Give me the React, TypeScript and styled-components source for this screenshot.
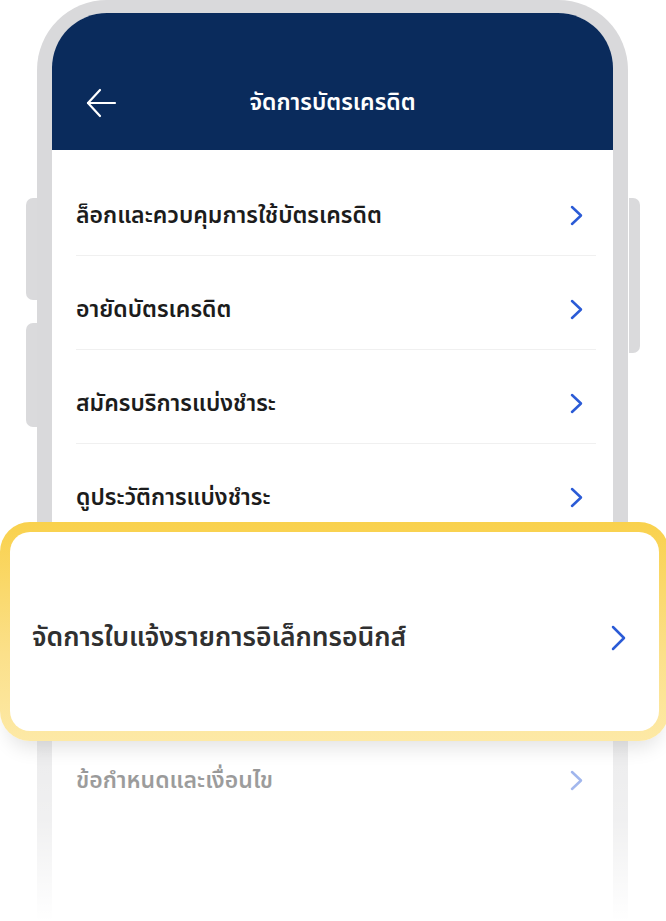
import React from "react";
import styled, { createGlobalStyle } from "styled-components";

const GlobalStyle = createGlobalStyle`
  html, body {
    margin: 0;
    padding: 0;
    background: #ffffff;
  }
  body {
    font-family: "Noto Sans Thai", "Noto Sans", "Liberation Sans", sans-serif;
  }
  * { box-sizing: border-box; }
`;

const Page = styled.div`
  position: relative;
  width: 666px;
  height: 921px;
  overflow: hidden;
  background: #ffffff;
`;

const Phone = styled.div`
  position: relative;
  width: 591px;
  min-height: 1000px;
  margin-left: 37px;
  border: 15px solid #d9d9db;
  border-top-width: 13px;
  border-bottom: none;
  border-radius: 70px 70px 0 0;
  background: #ffffff;
`;

const SideButton = styled.span<{ $side: "left" | "right"; $top: number; $height: number }>`
  position: absolute;
  top: ${(p) => p.$top}px;
  height: ${(p) => p.$height}px;
  width: 11px;
  background: #dadadc;
  ${(p) =>
    p.$side === "left"
      ? "left: -26px; border-radius: 7px 0 0 7px;"
      : "right: -27px; border-radius: 0 7px 7px 0;"}
`;

const Header = styled.header`
  height: 137px;
  background: #0a2b5c;
  border-radius: 55px 55px 0 0;
  display: grid;
  grid-template-columns: 1fr auto 1fr;
  align-items: center;
  padding: 65px 33px 22px 33px;
`;

const BackButton = styled.button`
  justify-self: start;
  display: flex;
  align-items: center;
  padding: 0;
  border: none;
  background: none;
  width: 32px;
  height: 32px;
`;

const Title = styled.h1`
  margin: 0;
  color: #ffffff;
  font-size: 23px;
  font-weight: 600;
  line-height: 30px;
`;

const List = styled.div`
  display: flex;
  flex-direction: column;
  padding: 12px 17px 0 24px;
`;

const Row = styled.div<{ $dim?: boolean }>`
  display: flex;
  align-items: center;
  justify-content: space-between;
  height: 94px;
  padding: 14px 13px 0 0;
  border-bottom: 1px solid ${(p) => (p.$dim ? "transparent" : "#f0f0f0")};
`;

const RowLabel = styled.span`
  color: #1c1c1c;
  font-size: 23px;
  font-weight: 600;
  line-height: 30px;
`;

const Spotlight = styled.div`
  position: relative;
  z-index: 2;
  height: 219px;
  margin: -16px -73px -14px -76px;
  border: 10px solid transparent;
  border-radius: 30px;
  background: linear-gradient(#ffffff, #ffffff) padding-box,
    linear-gradient(180deg, #f9d14c 0%, #fbe08a 60%, #fde9a6 100%) border-box;
  box-shadow: 0 14px 20px -8px rgba(0, 0, 0, 0.12);
  display: flex;
  align-items: center;
  justify-content: space-between;
  padding: 12px 33px 0 22px;
`;

const SpotlightLabel = styled.span`
  color: #303030;
  font-size: 26.5px;
  font-weight: 600;
  line-height: 34px;
`;

const Fade = styled.div`
  position: absolute;
  z-index: 1;
  left: 0;
  right: 0;
  top: 740px;
  bottom: 0;
  pointer-events: none;
  background: linear-gradient(
    180deg,
    rgba(255, 255, 255, 0.5) 0%,
    rgba(255, 255, 255, 0.62) 45%,
    rgba(255, 255, 255, 1) 100%
  );
`;

const Chevron = ({ w, h }: { w: number; h: number }) => (
  <svg width={w} height={h} viewBox={`0 0 ${w} ${h}`} fill="none">
    <polyline
      points={`2,2 ${w - 2},${h / 2} 2,${h - 2}`}
      stroke="#2b5bd6"
      strokeWidth={2.5}
      strokeLinecap="round"
      strokeLinejoin="round"
    />
  </svg>
);

const BackArrow = () => (
  <svg width="32" height="32" viewBox="0 0 32 32" fill="none">
    <line x1="3" y1="16" x2="30" y2="16" stroke="#ffffff" strokeWidth="2.2" strokeLinecap="round" />
    <polyline
      points="15,3 3,16 15,29"
      stroke="#ffffff"
      strokeWidth="2.2"
      strokeLinecap="round"
      strokeLinejoin="round"
    />
  </svg>
);

const items = [
  "ล็อกและควบคุมการใช้บัตรเครดิต",
  "อายัดบัตรเครดิต",
  "สมัครบริการแบ่งชำระ",
  "ดูประวัติการแบ่งชำระ",
];

export default function App() {
  return (
    <Page>
      <GlobalStyle />
      <Phone>
        <SideButton $side="left" $top={185} $height={102} />
        <SideButton $side="left" $top={310} $height={104} />
        <SideButton $side="right" $top={185} $height={155} />
        <Header>
          <BackButton aria-label="back">
            <BackArrow />
          </BackButton>
          <Title>จัดการบัตรเครดิต</Title>
          <span />
        </Header>
        <List>
          {items.map((t) => (
            <Row key={t}>
              <RowLabel>{t}</RowLabel>
              <Chevron w={13} h={21} />
            </Row>
          ))}
          <Spotlight>
            <SpotlightLabel>จัดการใบแจ้งรายการอิเล็กทรอนิกส์</SpotlightLabel>
            <Chevron w={15} h={26} />
          </Spotlight>
          <Row $dim>
            <RowLabel>ข้อกำหนดและเงื่อนไข</RowLabel>
            <Chevron w={13} h={21} />
          </Row>
        </List>
      </Phone>
      <Fade />
    </Page>
  );
}
